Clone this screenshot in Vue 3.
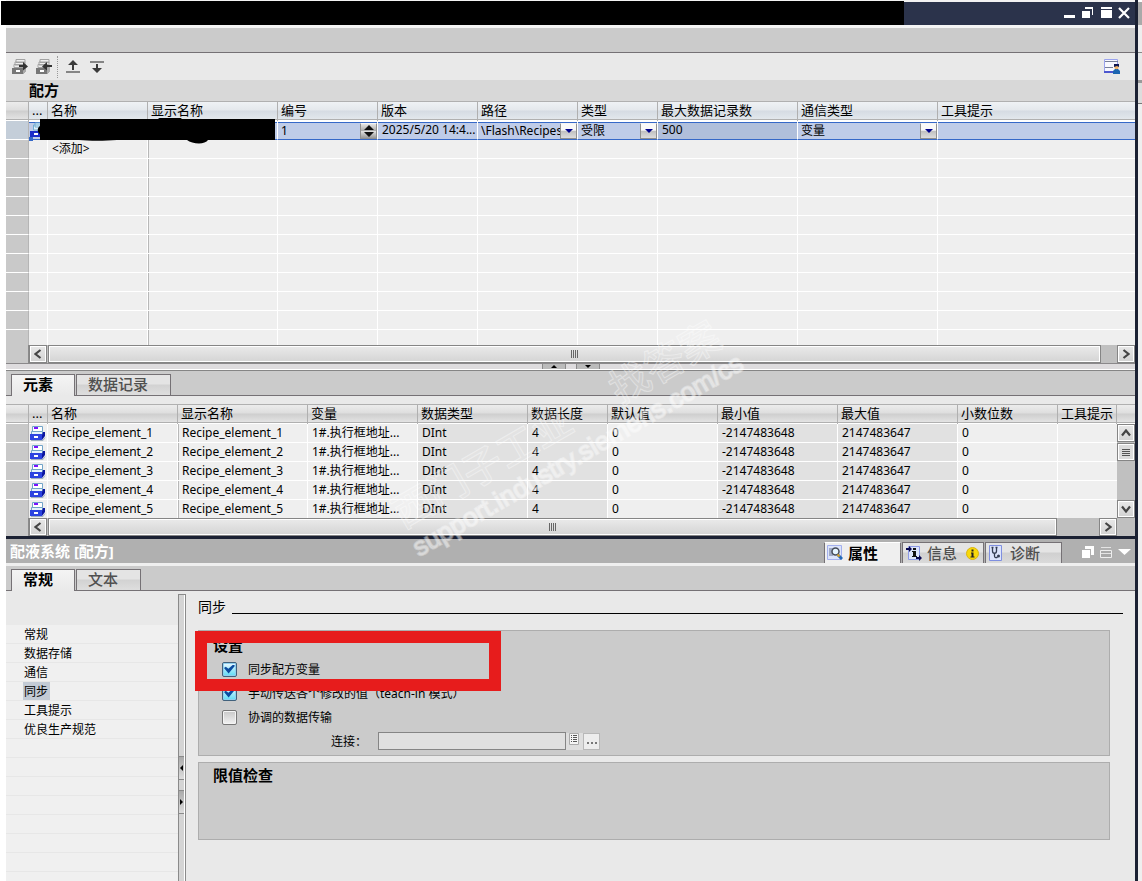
<script setup>
import { ref } from 'vue'

const recipeColumns = [
  { label: '', width: 23 },
  { label: '...', width: 19 },
  { label: '名称', width: 100 },
  { label: '显示名称', width: 130 },
  { label: '编号', width: 100 },
  { label: '版本', width: 100 },
  { label: '路径', width: 100 },
  { label: '类型', width: 80 },
  { label: '最大数据记录数', width: 140 },
  { label: '通信类型', width: 140 },
  { label: '工具提示' },
]

const elementColumns = [
  { label: '', width: 23 },
  { label: '...', width: 19 },
  { label: '名称', width: 130 },
  { label: '显示名称', width: 130 },
  { label: '变量', width: 110 },
  { label: '数据类型', width: 110 },
  { label: '数据长度', width: 80 },
  { label: '默认值', width: 110 },
  { label: '最小值', width: 120 },
  { label: '最大值', width: 120 },
  { label: '小数位数', width: 100 },
  { label: '工具提示' },
  { label: '', width: 18 },
]

const elements = [1, 2, 3, 4, 5].map((n) => ({
  name: `Recipe_element_${n}`,
  tag: '1#.执行框地址...',
  type: 'DInt',
  length: '4',
  initial: '0',
  min: '-2147483648',
  max: '2147483647',
  decimals: '0',
}))

const sections = ['常规', '数据存储', '通信', '同步', '工具提示', '优良生产规范']
const current = ref('同步')

const syncTags = ref(true)
const manualTransfer = ref(true)
const coordinated = ref(false)
const number = ref('1')
</script>

<template>
  <div class="app">
    <div class="window">
      <header class="titlebar">
        <div class="title-mask"></div>
        <div class="window-buttons">
          <button type="button" aria-label="最小化"><svg width="12" height="12"><path d="M0 8h11v3H0z" fill="#fff" /></svg></button>
          <button type="button" aria-label="还原"><svg width="12" height="12"><path d="M0 4h8v7H0zM3 0h8v8h-1V2H3z" fill="#fff" /></svg></button>
          <button type="button" aria-label="最大化"><svg width="12" height="12"><path d="M1 0h11v2H1zM1 3h11v8H1z" fill="#fff" /></svg></button>
          <button type="button" aria-label="关闭"><svg width="12" height="12"><path d="M1 1l10 10M11 1L1 11" stroke="#fff" stroke-width="2.2" /></svg></button>
        </div>
      </header>
      <div class="band"></div>

      <div class="toolbar">
        <button type="button" aria-label="导出">
          <svg width="16" height="16" viewBox="0 0 16 16">
            <path d="M4 .5h9v3H4zM3 3h10v3H3zM2 5.500h10v3H2z" fill="#eee" stroke="#a2a2a2" />
            <path d="M0 9h11l3-3v6l-3 3H0z" fill="#777" /><path d="M11 9l3-3v6l-3 3z" fill="#aaa" />
            <path d="M4 11h4v2H4z" fill="#fff" />
            <path d="M7 6h4V3l5 4.500-5 4V8H7z" fill="#333" />
          </svg>
        </button>
        <button type="button" aria-label="导入">
          <svg width="16" height="16" viewBox="0 0 16 16">
            <path d="M4 .5h9v3H4zM3 3h10v3H3zM2 5.500h10v3H2z" fill="#eee" stroke="#a2a2a2" />
            <path d="M0 9h11l3-3v6l-3 3H0z" fill="#777" /><path d="M11 9l3-3v6l-3 3z" fill="#aaa" />
            <path d="M4 11h4v2H4z" fill="#fff" />
            <path d="M16 6h-5V3L6 7.500l5 4V8h5z" fill="#333" />
          </svg>
        </button>
        <i class="divider"></i>
        <button type="button" aria-label="上移">
          <svg width="16" height="16" viewBox="0 0 16 16">
            <path d="M0 12h14v2H0z" fill="#858585" /><path d="M7 1l5 5H8v5H6V6H2z" fill="#3a3a3a" />
          </svg>
        </button>
        <button type="button" aria-label="下移">
          <svg width="16" height="16" viewBox="0 0 16 16">
            <path d="M0 2h14v2H0z" fill="#858585" /><path d="M6 5h2v4h4l-5 5-5-5h4z" fill="#3a3a3a" />
          </svg>
        </button>
        <button type="button" class="layout-button" aria-label="布局">
          <svg width="16" height="16" viewBox="0 0 16 16">
            <path d="M0.500 .5h13v12H.500z" fill="#f7f8ff" stroke="#9aa3ee" />
            <path d="M1 2.500h13M1 8.500h8" stroke="#777f98" /><path d="M0 13h10" stroke="#4d57cf" stroke-width="2" />
            <path d="M9 15v-3l2-2h3l2 2v3z" fill="#1d66b0" /><circle cx="12.500" cy="8" r="2.200" fill="#efb368" />
            <path d="M10 8V5h5v3l-2-1z" fill="#101850" />
          </svg>
        </button>
      </div>

      <h1 class="pane-title">配方</h1>

      <div class="recipe-pane">
        <table class="grid blue">
          <colgroup>
            <col v-for="(c, i) in recipeColumns" :key="i" :style="c.width ? { width: c.width + 'px' } : {}" />
          </colgroup>
          <thead>
            <tr><th v-for="(c, i) in recipeColumns" :key="i">{{ c.label }}</th></tr>
          </thead>
          <tbody>
            <tr class="selected">
              <td></td>
              <td class="icon-cell">
                <svg width="16" height="16" viewBox="0 0 16 16">
                  <path d="M5 1h8v4H5zM3.500 3h9v5h-9z" fill="#dff0fa" stroke="#72add2" />
                  <path d="M0 9h11l4-4v6l-4 4H0z" fill="#1a2cc8" /><path d="M4 11h4v2H4z" fill="#fff" />
                </svg>
              </td>
              <td></td>
              <td></td>
              <td>
                <div class="field">
                  <input v-model="number" type="text" aria-label="编号" />
                  <span class="drop spin"><svg width="10" height="12"><path d="M5 0l5 5H0zM5 12l5-5H0z" fill="#111" /></svg></span>
                </div>
              </td>
              <td>2025/5/20 14:4...</td>
              <td>
                <div class="field">
                  <select aria-label="路径"><option>\Flash\Recipes</option></select>
                  <span class="drop"><svg width="8" height="4"><path d="M0 0h8L4 4z" fill="#00008b" /></svg></span>
                </div>
              </td>
              <td>
                <div class="field">
                  <select aria-label="类型"><option>受限</option></select>
                  <span class="drop"><svg width="8" height="4"><path d="M0 0h8L4 4z" fill="#00008b" /></svg></span>
                </div>
              </td>
              <td class="strong">500</td>
              <td>
                <div class="field">
                  <select aria-label="通信类型"><option>变量</option></select>
                  <span class="drop"><svg width="8" height="4"><path d="M0 0h8L4 4z" fill="#00008b" /></svg></span>
                </div>
              </td>
              <td></td>
            </tr>
            <tr>
              <td></td><td></td><td>&lt;添加&gt;</td>
              <td v-for="n in 8" :key="n"></td>
            </tr>
            <tr v-for="n in 10" :key="n">
              <td v-for="m in 11" :key="m"></td>
            </tr>
          </tbody>
        </table>
        <svg class="mask" width="250" height="30" viewBox="0 0 250 30">
          <path d="M3 19h4v4H3z" fill="#3568c8" />
          <path d="M14 1h118c4-4 20-4 24 0h93v21h-67c-3 5-16 4-21 0-23 0-46 0-70 0-12 1-28 1-38 0H14v-6c-3-2-3-6 0-8z" fill="#000" />
        </svg>
      </div>

      <div class="hscroll">
        <i class="gutter"></i>
        <button type="button" class="sb" aria-label="向左"><svg width="8" height="10"><path d="M6.500 1l-5 4 5 4" /></svg></button>
        <div class="thumb"><i></i><i></i><i></i><i></i></div>
        <i class="track"></i>
        <button type="button" class="sb" aria-label="向右"><svg width="8" height="10"><path d="M1.500 1l5 4-5 4" /></svg></button>
      </div>

      <div class="hsplit">
        <button type="button" aria-label="收起"><svg width="6" height="3"><path d="M0 3h6L3 0z" /></svg></button>
        <button type="button" aria-label="展开"><svg width="6" height="3"><path d="M0 0h6L3 3z" /></svg></button>
      </div>

      <div class="tabs">
        <button type="button" class="tab active">元素</button>
        <button type="button" class="tab">数据记录</button>
      </div>

      <div class="element-pane">
        <table class="grid gray">
          <colgroup>
            <col v-for="(c, i) in elementColumns" :key="i" :style="c.width ? { width: c.width + 'px' } : {}" />
          </colgroup>
          <thead>
            <tr><th v-for="(c, i) in elementColumns" :key="i">{{ c.label }}</th></tr>
          </thead>
          <tbody>
            <tr v-for="(e, i) in elements" :key="e.name">
              <td></td>
              <td class="icon-cell">
                <svg width="16" height="16" viewBox="0 0 16 16">
                  <path d="M2.500 1.500h10v5h-10z" fill="#fff" stroke="#72a4c8" /><path d="M4 2h4v2H4z" fill="#7a12ff" />
                  <path d="M1.500 6.500h11v3h-11z" fill="#e4f3fb" stroke="#72a4c8" />
                  <path d="M12 10l1-3h2v4l-3 4z" fill="#0b16a0" /><path d="M0 9h12v6H0z" fill="#2c44e0" />
                  <path d="M4 11h4v2H4z" fill="#fff" /><path d="M1 15.500h12l2-3" stroke="#9fb0c0" fill="none" />
                </svg>
              </td>
              <td>{{ e.name }}</td>
              <td>{{ e.name }}</td>
              <td>{{ e.tag }}</td>
              <td class="locked">{{ e.type }}</td>
              <td class="locked">{{ e.length }}</td>
              <td>{{ e.initial }}</td>
              <td class="locked">{{ e.min }}</td>
              <td class="locked">{{ e.max }}</td>
              <td>{{ e.decimals }}</td>
              <td></td>
              <td v-if="i === 0" rowspan="5" class="vscroll-cell">
                <div class="vscroll">
                  <button type="button" class="sb" aria-label="向上"><svg width="10" height="8"><path d="M1 6.500l4-5 4 5" /></svg></button>
                  <div class="vthumb"><i></i><i></i><i></i><i></i></div>
                  <button type="button" class="sb last" aria-label="向下"><svg width="10" height="8"><path d="M1 1.500l4 5 4-5" /></svg></button>
                </div>
              </td>
            </tr>
          </tbody>
        </table>
      </div>

      <div class="hscroll lower">
        <i class="gutter"></i>
        <button type="button" class="sb" aria-label="向左"><svg width="8" height="10"><path d="M6.500 1l-5 4 5 4" /></svg></button>
        <div class="thumb"><i></i><i></i><i></i><i></i></div>
        <i class="track wide"></i>
        <button type="button" class="sb" aria-label="向右"><svg width="8" height="10"><path d="M1.500 1l5 4-5 4" /></svg></button>
        <i class="corner"></i>
      </div>

      <div class="inspector-bar">
        <h2>配液系统 [配方]</h2>
        <button type="button" class="itab active">
          <svg width="16" height="16" viewBox="0 0 16 16">
            <path d="M.5 0.500h14v14H.5z" fill="#dce4fb" stroke="#a3b0ee" /><path d="M2 4h4M2 6h3M2 8h3M2 10h4" stroke="#62708f" />
            <circle cx="8.500" cy="6.500" r="3.500" fill="#e5f4ff" stroke="#454b58" stroke-width="1.500" />
            <path d="M11 10l4 4" stroke="#246ab8" stroke-width="3" /><path d="M10.500 9.500l2 2" stroke="#dca326" stroke-width="2" />
          </svg>
          属性
        </button>
        <button type="button" class="itab info">
          <svg width="16" height="16" viewBox="0 0 16 16">
            <path d="M2.500 1.500h11v13h-11z" fill="#dce4fb" stroke="#8c9ae6" />
            <path d="M0 3h3V1l3 3-3 3V5H0zM10 12h3v-2l3 3-3 3v-2h-3z" fill="#06064e" />
            <path d="M7 3h3v2H7zM6 6h4v5h1v1H6v-1h1V7H6z" fill="#111" />
          </svg>
          信息
          <svg class="badge" width="13" height="13" viewBox="0 0 13 13">
            <circle cx="6.500" cy="6.500" r="6" fill="#f8d90b" stroke="#d9b412" />
            <path d="M5.500 2.500h2v2h-2zM5 5.500h2.500v4h1v1H4.500v-1h1v-3H5z" fill="#222" />
          </svg>
        </button>
        <button type="button" class="itab">
          <svg width="14" height="16" viewBox="0 0 14 16">
            <path d="M.5 .5h12v15H.5z" fill="#dce4fb" stroke="#7f8fe0" />
            <path d="M3.500 3v3c0 3 4 3 4 0V3M2.500 2.500h2M6.500 2.500h2M5.500 8v3c0 2 2 2 3 1" fill="none" stroke="#333c50" stroke-width="1.300" />
            <circle cx="9.500" cy="11" r="1.500" fill="#333c50" />
          </svg>
          诊断
        </button>
        <div class="inspector-tools">
          <button type="button" aria-label="浮动"><svg width="12" height="12"><path d="M0 4h8v8H0zM3 0h9v9h-3V3H3z" fill="#fff" /></svg></button>
          <button type="button" aria-label="列表"><svg width="12" height="12"><path d="M0.500 4.500h11v7H.5z" fill="#a8a8a8" stroke="#eee" /><path d="M1 1.500h10M1 7.500h10" stroke="#e4e4e4" /></svg></button>
          <button type="button" aria-label="折叠"><svg width="13" height="12"><path d="M0 3h13L6.500 9z" fill="#fff" /></svg></button>
        </div>
      </div>

      <div class="tabs">
        <button type="button" class="tab active">常规</button>
        <button type="button" class="tab">文本</button>
      </div>

      <div class="properties">
        <nav class="side">
          <a v-for="s in sections" :key="s" href="#" @click.prevent="current = s"><span :class="{ current: s === current }">{{ s }}</span></a>
        </nav>
        <div class="vsplit">
          <button type="button" aria-label="向左收起"><svg width="3" height="6"><path d="M3 0v6L0 3z" /></svg></button>
          <button type="button" aria-label="向右展开"><svg width="3" height="6"><path d="M0 0v6l3-3z" /></svg></button>
        </div>
        <main class="content">
          <h3>同步</h3>
          <section class="group">
            <h4>设置</h4>
            <label class="check"><input v-model="syncTags" type="checkbox" />同步配方变量</label>
            <label class="check"><input v-model="manualTransfer" type="checkbox" />手动传送各个修改的值（teach-in 模式）</label>
            <label class="check"><input v-model="coordinated" type="checkbox" />协调的数据传输</label>
            <div class="connection">
              <label for="connection">连接：</label>
              <input id="connection" type="text" disabled />
              <button type="button" class="list" aria-label="列表">
                <svg width="11" height="13" viewBox="0 0 11 13"><path d="M.5 .5h9v11h-9z" fill="#f5f5f5" stroke="#aaa" /><path d="M2 2.500h1M4 2.500h4M2 4.500h1M4 4.500h4M2 6.500h1M4 6.500h4M2 8.500h1M4 8.500h4" stroke="#555" /></svg>
              </button>
              <button type="button" class="more" aria-label="浏览"><svg width="10" height="2"><path d="M0 0h2v2H0zM4 0h2v2H4zM8 0h2v2H8z" fill="#777" /></svg></button>
            </div>
            <div class="highlight"></div>
          </section>
          <section class="group limits">
            <h4>限值检查</h4>
          </section>
        </main>
      </div>
    </div>
    <aside class="edge"></aside>

    <svg class="watermark" width="450" height="270" viewBox="0 0 450 270">
      <g transform="rotate(-30 30 240)">
        <text x="30" y="216" class="wm-cn">西门子工业</text>
        <text x="280" y="217" class="wm-cn">找答案</text>
        <text x="30" y="248" class="wm-url">support.industry.siemens.com/cs</text>
      </g>
    </svg>
  </div>
</template>

<style>
body {
  margin: 0;
  background: #fff;
}
</style>

<style scoped>
.app {
  position: relative;
  display: flex;
  min-height: 100vh;
  padding-left: 6px;
  overflow: hidden;
  box-sizing: border-box;
  font-family: "Noto Sans", "Noto Sans CJK SC", sans-serif;
  font-size: 12px;
  color: #000;
}
button, input, select {
  font: inherit;
  color: inherit;
  margin: 0;
  padding: 0;
  border: 0;
  border-radius: 0;
  background: none;
  box-sizing: border-box;
}
svg { display: block; }
h1, h2, h3, h4 { margin: 0; font-size: 15px; font-weight: 700; }
.window {
  flex: 1;
  min-width: 0;
  display: flex;
  flex-direction: column;
  background: #e9e9e9;
  border-right: 3px solid #1b2133;
}
.edge {
  width: 4px;
  background: linear-gradient(#fff 2px, #a9a9a9 2px 25px, #eee 25px 52px, #888 52px 53px, #e9e9e9 53px 80px, #999 80px 83px, #ddd 83px 103px, #777 103px 104px, #efefef 104px);
}
.titlebar {
  display: flex;
  justify-content: space-between;
  align-items: stretch;
  height: 23px;
  border-top: 2px solid #f2f2f2;
  background: #2b334b;
}
.title-mask {
  width: 80%;
  margin: -1px 0 0 -5px;
  background: #000;
}
.window-buttons { display: flex; gap: 6px; padding: 5px 5px 0 0; }
.window-buttons button { height: 12px; }
.band {
  height: 24px;
  border-top: 3px solid #f4f4f4;
  border-bottom: 1px solid #757175;
  background: #cbcbcb;
}
.toolbar {
  display: flex;
  align-items: center;
  height: 27px;
  gap: 8px;
  padding: 0 15px 0 6px;
}
.divider { height: 22px; margin-left: -3px; border-left: 1px dotted #999; }
.layout-button { margin-left: auto; }
.pane-title {
  height: 21px;
  line-height: 21px;
  padding-left: 23px;
  background: #d8d8d8;
}
.recipe-pane { position: relative; height: 244px; overflow: hidden; }
.element-pane { height: 114px; margin-top: 8px; overflow: hidden; }
.grid {
  width: 100%;
  table-layout: fixed;
  border-collapse: separate;
  border-spacing: 0;
}
th, td {
  box-sizing: border-box;
  padding: 0 0 0 4px;
  text-align: left;
  white-space: nowrap;
  overflow: hidden;
}
th {
  height: 20px;
  padding: 0 0 2px 3px;
  font-size: 13px;
  line-height: 18px;
  font-weight: 400;
  border-right: 1px solid #b0b0b0;
}
th:last-child { border-right: 0; }
.blue th { background: linear-gradient(#b0b0b0 1px, #eff2f5 1px, #e4e8ec 9px, #d5dbe3 10px, #e2e7ec 18px, #b0b0b0 18px 19px, #fff 19px); }
.gray th, .blue th:first-child { background: linear-gradient(#b0b0b0 1px, #ececec 1px, #dedede 9px, #cecece 10px, #e3e3e3 18px, #b0b0b0 18px 19px, #fff 19px); }
td {
  height: 19px;
  line-height: 18px;
  background: #efefef;
  border-right: 1px solid #fff;
  border-bottom: 1px solid #fff;
}
tbody td:first-child { background: #c9c9c9; border-right-color: #b5b5b5; }
td:nth-child(4) { box-shadow: inset 1px 0 #b8b8b8; }
td:nth-child(11) { border-right: 0; }
.gray td:nth-child(11) { border-right: 1px solid #fff; }
.gray td:nth-child(12) { border-right: 0; }
.gray .locked { background: #e1e1e1; }
.selected td {
  background: #bfcce8;
  border-bottom-color: #3568c8;
  box-shadow: inset 0 1px #fff, inset 0 2px #3568c8;
}
.selected td:first-child { background: #c4ced9; box-shadow: none; border-bottom-color: #fff; }
.selected td.strong { background: #b0bfdb; }
td.icon-cell { padding: 0 0 0 1px; }
.field { display: grid; height: 18px; margin-left: -4px; padding-top: 2px; box-sizing: border-box; }
.field > * { grid-area: 1 / 1; min-width: 0; }
.field input, .field select {
  appearance: none;
  width: 100%;
  height: 15px;
  padding: 0 0 0 3px;
  line-height: 15px;
}
.drop {
  justify-self: end;
  display: grid;
  place-items: center;
  width: 17px;
  height: 16px;
  box-sizing: border-box;
  border: 1px solid #8f8f8f;
  border-top-color: #f4f4f4;
  background: linear-gradient(#f8f8f8 45%, #bfbfbf 50%, #ddd);
  pointer-events: none;
}
.spin { background: linear-gradient(#e4e4e4, #aaa 48%, #e0e0e0 52%, #999); }
.mask { position: absolute; left: 20px; top: 17px; }

.hscroll { display: flex; height: 19px; background: #c0c0c0; box-sizing: border-box; border-bottom: 1px solid #8a888a; }
.hscroll.lower { height: 18px; border-bottom: 0; }
.gutter { width: 22px; background: #c9c9c9; border-right: 1px solid #8a8a8a; }
.sb {
  display: grid;
  place-items: center;
  width: 18px;
  border: 1px solid #858585;
  box-shadow: inset 0 0 0 1px #fff;
  background: linear-gradient(#e8e8e8, #d2d2d2);
}
.sb path { fill: none; stroke: #444; stroke-width: 2.200; }
.thumb {
  flex: 1;
  display: flex;
  align-items: center;
  justify-content: center;
  gap: 1px;
  margin-left: 1px;
  border: 1px solid #858585;
  box-shadow: inset 0 0 0 1px #fff;
  background: linear-gradient(#eaeaea, #d4d4d4);
}
.thumb i { width: 1px; height: 8px; background: #666; }
.track { width: 16px; }
.track.wide { width: 42px; }
.corner { width: 18px; }
.hsplit {
  display: flex;
  justify-content: center;
  gap: 10px;
  height: 6px;
  border-bottom: 1px solid #858585;
  background: #dedcde;
  box-shadow: inset 0 -1px #fff;
}
.hsplit button {
  display: grid;
  place-items: center;
  width: 24px;
  height: 5px;
  border: 1px solid #8a8a8a;
  border-width: 0 1px;
  background: #bbb;
}
.tabs {
  display: flex;
  align-items: flex-end;
  gap: 1px;
  height: 24px;
  padding-left: 5px;
  border-bottom: 1px solid #757175;
  background: #cbcbcb;
}
.tab {
  height: 21px;
  padding: 0 22px 2px 11px;
  border: 1px solid #757175;
  border-bottom: 0;
  font-size: 15px;
  line-height: 18px;
  font-weight: 500;
  color: #505050;
  background: linear-gradient(#e4e4e4 45%, #d2d2d2 50%, #dedede);
}
.tab.active {
  height: 22px;
  margin-bottom: -1px;
  padding: 0 21px 3px 11px;
  font-weight: 700;
  color: #000;
  background: linear-gradient(#f4f4f4, #e9e9e9);
}
td.vscroll-cell { padding: 0; border: 0; vertical-align: top; }
.vscroll { display: flex; flex-direction: column; height: 94px; background: #c0c0c0; }
.vscroll .sb { height: 18px; }
.vscroll .last { margin-top: auto; }
.vthumb {
  display: flex;
  flex-direction: column;
  align-items: center;
  justify-content: center;
  gap: 1px;
  height: 18px;
  margin-top: 1px;
  box-sizing: border-box;
  border: 1px solid #858585;
  background: #dcdcdc;
  box-shadow: inset 0 0 0 1px #fff;
}
.vthumb i { width: 8px; height: 1px; background: #555; }

.inspector-bar {
  display: flex;
  align-items: flex-end;
  gap: 1px;
  height: 24px;
  border-top: 3px solid #1b2133;
  border-bottom: 3px solid #efefef;
  background: #b0b0b0;
}
.inspector-bar h2 {
  margin-right: auto;
  padding-left: 4px;
  line-height: 24px;
  color: #fff;
}
.itab {
  display: flex;
  align-items: center;
  gap: 7px;
  width: 77px;
  height: 21px;
  padding: 0 0 0 3px;
  border: 1px solid #757175;
  border-bottom: 0;
  font-size: 15px;
  line-height: 18px;
  font-weight: 500;
  color: #505050;
  white-space: nowrap;
  background: linear-gradient(#e4e4e4 45%, #d0d0d0 50%, #dadada);
}
.itab.info { width: 82px; gap: 5px; }
.badge { margin-left: 4px; }
.itab.active {
  gap: 5px;
  padding-left: 2px;
  border-top-color: #fff;
  font-weight: 700;
  color: #000;
  background: #efefef;
}
.inspector-tools { display: flex; gap: 6px; padding: 0 4px 5px 19px; }
.properties { flex: 1; display: flex; }
.side {
  width: 172px;
  flex: none;
  box-sizing: border-box;
  margin-top: 34px;
  background: repeating-linear-gradient(#f0f0f0 0 18px, #e7e7e7 18px 19px);
}
.side a {
  display: flex;
  height: 19px;
  padding-left: 17px;
  color: #000;
  text-decoration: none;
}
.side span { height: 18px; line-height: 20px; padding: 0 2px 0 1px; }
.side .current { background: #c3cbd5; }
.vsplit {
  width: 8px;
  flex: none;
  box-sizing: border-box;
  margin-top: 3px;
  padding-top: 161px;
  border: 1px solid #8a8a8a;
  border-bottom: 0;
  background: #d4d4d4;
  box-shadow: inset -1px 0 #fff;
}
.vsplit button {
  display: grid;
  place-items: center;
  width: 5px;
  height: 24px;
  margin-bottom: 10px;
  border: 1px solid #8a8a8a;
  border-width: 1px 0;
  background: linear-gradient(#aaa, #ddd);
}
.content { flex: 1; min-width: 0; padding: 7px 25px 0 12px; }
h3 {
  display: flex;
  gap: 6px;
  height: 20px;
  line-height: 18px;
  margin-right: -13px;
  font-size: 14px;
  font-weight: 400;
}
h3::after { content: ""; flex: 1; height: 15px; border-bottom: 1px solid #000; }
.group {
  position: relative;
  height: 126px;
  margin-top: 12px;
  padding: 4px 0 0 14px;
  box-sizing: border-box;
  border: 1px solid #adadad;
  background: #cbcbcb;
}
.group.limits { height: 78px; margin-top: 6px; padding-top: 2px; }
.group h4 { height: 22px; line-height: 20px; }
.check { display: flex; align-items: center; gap: 11px; height: 24px; padding-left: 9px; }
.check input {
  appearance: none;
  position: relative;
  width: 15px;
  height: 15px;
  border: 1px solid #777;
  border-radius: 2px;
  background: linear-gradient(#c8c8c8, #f2f2f2);
  box-shadow: inset 0 0 0 1px #f4f4f4;
}
.check input:checked {
  border-color: #41617c;
  background: linear-gradient(#eef8ff, #5cdcf5);
  box-shadow: inset 0 0 0 1px #8fd0f0;
}
.check input:checked::after {
  content: "";
  position: absolute;
  inset: 2px 1px 2px 1px;
  background: #0a4ba0;
  clip-path: polygon(0 38%, 16% 26%, 40% 48%, 84% 0, 100% 14%, 42% 100%);
}
.connection { display: flex; align-items: center; height: 24px; }
.connection label { width: 47px; padding-left: 118px; }
.connection input { width: 188px; height: 18px; border: 1px solid #858585; background: #e0e0e0; }
.connection button { display: grid; place-items: center; height: 17px; background: #dedede; }
.connection .list { width: 17px; padding-bottom: 3px; }
.connection .more { width: 17px; padding-top: 4px; border: 1px solid #b8b8b8; background: #ededed; }
.highlight {
  position: absolute;
  left: -4px;
  top: 0;
  width: 306px;
  height: 60px;
  box-sizing: border-box;
  border: 12px solid #e71c1c;
  pointer-events: none;
}
.watermark { position: absolute; left: 385px; top: 310px; overflow: visible; pointer-events: none; }
.watermark text { fill: #fff; stroke: #fff; }
.wm-cn { font-family: "Noto Sans CJK SC", sans-serif; font-weight: 500; font-size: 40px; fill-opacity: 0.1; stroke-opacity: 0.4; stroke-width: 1px; }
.wm-url { font-family: "Liberation Sans", sans-serif; font-size: 26px; fill-opacity: 0.3; stroke-opacity: 0.35; stroke-width: 2px; }
</style>
